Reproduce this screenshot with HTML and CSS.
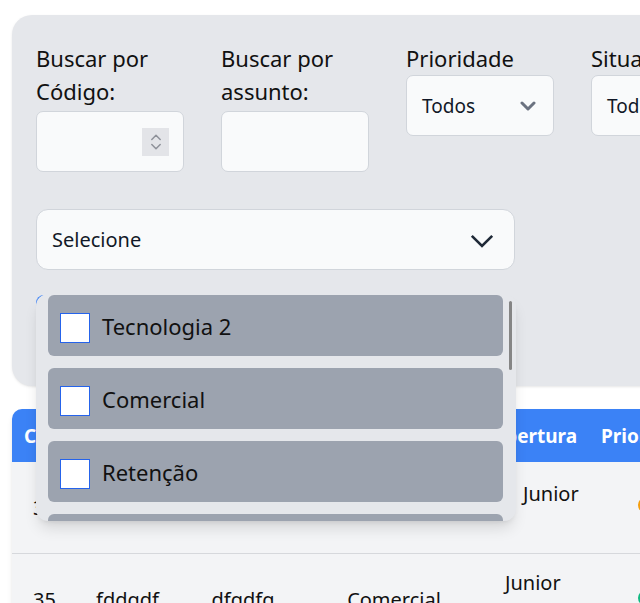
FILE: index.html
```html
<!DOCTYPE html>
<html lang="pt-BR">
<head>
<meta charset="utf-8">
<title>Chamados</title>
<link rel="stylesheet" href="styles.css">
</head>
<body>
<div class="page">
  <section class="filters">
    <div class="filter-row">
      <div class="field">
        <label class="label">Buscar por Código:</label>
        <div class="input input-low">
          <span class="spinner">
            <svg width="12" height="20" viewBox="0 0 12 20"><polyline points="1.8,7.5 6,3.3 10.2,7.5" fill="none" stroke="#8e9199" stroke-width="1.5" stroke-linecap="round" stroke-linejoin="round"/><polyline points="1.8,12.5 6,16.7 10.2,12.5" fill="none" stroke="#8e9199" stroke-width="1.5" stroke-linecap="round" stroke-linejoin="round"/></svg>
          </span>
        </div>
      </div>
      <div class="field">
        <label class="label">Buscar por assunto:</label>
        <div class="input input-low"></div>
      </div>
      <div class="field">
        <label class="label">Prioridade</label>
        <div class="select">
          <span>Todos</span>
          <svg width="16" height="10" viewBox="0 0 16 10"><polyline points="2,2 8,8 14,2" fill="none" stroke="#6b7280" stroke-width="3" stroke-linecap="round" stroke-linejoin="round"/></svg>
        </div>
      </div>
      <div class="field">
        <label class="label">Situação</label>
        <div class="select">
          <span>Todos</span>
          <svg width="16" height="10" viewBox="0 0 16 10"><polyline points="2,2 8,8 14,2" fill="none" stroke="#6b7280" stroke-width="3" stroke-linecap="round" stroke-linejoin="round"/></svg>
        </div>
      </div>
    </div>

    <div class="multi-wrap">
      <div class="multi">
        <span>Selecione</span>
        <svg width="24" height="14" viewBox="0 0 24 14"><polyline points="1.8,1.8 12,12 22.2,1.8" fill="none" stroke="#1f2937" stroke-width="2.6"/></svg>
      </div>
      <div class="panel">
        <div class="option"><span class="check"></span><span>Tecnologia 2</span></div>
        <div class="option"><span class="check"></span><span>Comercial</span></div>
        <div class="option"><span class="check"></span><span>Retenção</span></div>
        <div class="option"><span class="check"></span><span>Financeiro</span></div>
        <div class="option"><span class="check"></span><span>Suporte</span></div>
        <span class="thumb"></span>
      </div>
    </div>

    <button class="btn">Filtrar</button>
  </section>

  <section class="table">
    <div class="trow thead">
      <div class="th">Cód.</div>
      <div class="th">Assunto</div>
      <div class="th">Descrição</div>
      <div class="th">Setor</div>
      <div class="th">Abertura</div>
      <div class="th">Prioridade</div>
      <div class="th">Situação</div>
    </div>
    <div class="trow row1">
      <div class="td">36</div>
      <div class="td"></div>
      <div class="td"></div>
      <div class="td"></div>
      <div class="td td-stack pad-a"><span>Junior</span><span class="blank"></span></div>
      <div class="td td-dot"><span class="dot dot-orange"></span></div>
      <div class="td">Aberto</div>
    </div>
    <div class="trow row2">
      <div class="td">35</div>
      <div class="td">fddgdf</div>
      <div class="td">dfgdfg</div>
      <div class="td">Comercial</div>
      <div class="td td-stack pad-b"><span>Junior</span><span class="blank"></span></div>
      <div class="td td-dot"><span class="dot dot-green"></span></div>
      <div class="td">Aberto</div>
    </div>
  </section>
</div>
</body>
</html>
```

FILE: styles.css
```css
* { box-sizing: border-box; }

html, body {
  margin: 0;
  overflow: hidden;
  background: #ffffff;
}

body {
  font-family: "Noto Sans", "Open Sans", sans-serif;
  color: #111111;
}

.page {
  width: 1100px;
  padding: 15px 0 0 12px;
}

/* ---------- filter card ---------- */
.filters {
  width: 1000px;
  background: #e5e7eb;
  border-radius: 20px;
  padding: 27px 24px 47px;
  box-shadow: 0 1px 3px rgba(0,0,0,0.08), 0 1px 2px -1px rgba(0,0,0,0.08);
}

.filter-row {
  display: grid;
  grid-template-columns: repeat(4, 148px);
  column-gap: 37px;
  align-items: start;
}

.label {
  display: block;
  font-size: 22px;
  line-height: 33px;
  color: #111111;
}

.input,
.select {
  height: 61px;
  background: #f9fafb;
  border: 1px solid #d1d5db;
  border-radius: 7px;
}

.input {
  display: flex;
  align-items: center;
  justify-content: flex-end;
  padding-right: 14px;
}

.input-low { margin-top: 3px; }

.spinner {
  width: 27px;
  height: 28px;
  background: #e3e4e8;
  display: flex;
  align-items: center;
  justify-content: center;
}

.select {
  display: flex;
  align-items: center;
  justify-content: space-between;
  padding: 0 17px 0 15px;
  font-size: 19px;
  color: #111827;
}

.select svg { margin-top: 1px; }

/* ---------- multi select ---------- */
.multi-wrap {
  position: relative;
  width: 479px;
  margin-top: 37px;
}

.multi {
  height: 61px;
  background: #f9fafb;
  border: 1px solid #d1d5db;
  border-radius: 12px;
  display: flex;
  align-items: center;
  justify-content: space-between;
  padding: 0 20px 0 15px;
  font-size: 20px;
  color: #111827;
}

.multi svg { margin-top: 3px; }

.panel {
  position: absolute;
  top: 85px;
  left: 0;
  width: 480px;
  height: 227px;
  background: #e5e7eb;
  border-radius: 12px;
  overflow: hidden;
  padding: 1px 13px 0 12px;
  display: flex;
  flex-direction: column;
  gap: 12px;
  z-index: 10;
  box-shadow: 0 10px 15px -3px rgba(0,0,0,0.12), 0 4px 6px -4px rgba(0,0,0,0.12);
}

.option {
  flex: none;
  height: 61px;
  background: #9ca3af;
  border-radius: 6px;
  display: flex;
  align-items: center;
  gap: 12px;
  padding-left: 12px;
  font-size: 22px;
  color: #111111;
}

.check {
  width: 30px;
  height: 30px;
  background: #ffffff;
  border: 1px solid #2563eb;
  margin-top: 4px;
}

.thumb {
  position: absolute;
  left: 473px;
  top: 7px;
  width: 3px;
  height: 69px;
  background: #858585;
  border-radius: 2px;
}

.btn {
  display: block;
  margin-top: 25px;
  width: 140px;
  height: 44px;
  border: 0;
  border-radius: 8px;
  background: #3b82f6;
  color: #ffffff;
  font-family: inherit;
  font-size: 18px;
}

/* ---------- table ---------- */
.table {
  width: 1000px;
  margin-top: 23px;
  border-radius: 10px 10px 0 0;
  overflow: hidden;
  background: #f3f4f6;
  box-shadow: 0 4px 6px -1px rgba(0,0,0,0.1), 0 2px 4px -2px rgba(0,0,0,0.1);
}

.trow {
  display: grid;
  grid-template-columns: 65px 101px 130px 172px 109px 120px 1fr;
}

.thead {
  height: 53px;
  background: #3b82f6;
}

.th {
  display: flex;
  align-items: center;
  padding: 0 12px;
  color: #ffffff;
  font-weight: 700;
  font-size: 19px;
  white-space: nowrap;
}

.row1 {
  height: 92px;
  border-bottom: 1px solid #d6d8dc;
}

.row2 { height: 92px; }

.td {
  display: flex;
  align-items: center;
  justify-content: center;
  font-size: 20px;
  line-height: 30px;
  color: #111111;
  white-space: nowrap;
}

.td-stack {
  flex-direction: column;
  align-items: flex-start;
  justify-content: center;
}

.blank { height: 30px; }

.pad-a { padding-left: 43px; padding-top: 2px; }
.pad-b { padding-left: 25px; padding-bottom: 4px; }

.td-dot {
  justify-content: flex-start;
  padding-left: 49px;
}

.dot {
  width: 16px;
  height: 16px;
  border-radius: 50%;
  margin-bottom: 5px;
}

.dot-orange { background: #f59e0b; }
.dot-green { background: #10b981; }
```
